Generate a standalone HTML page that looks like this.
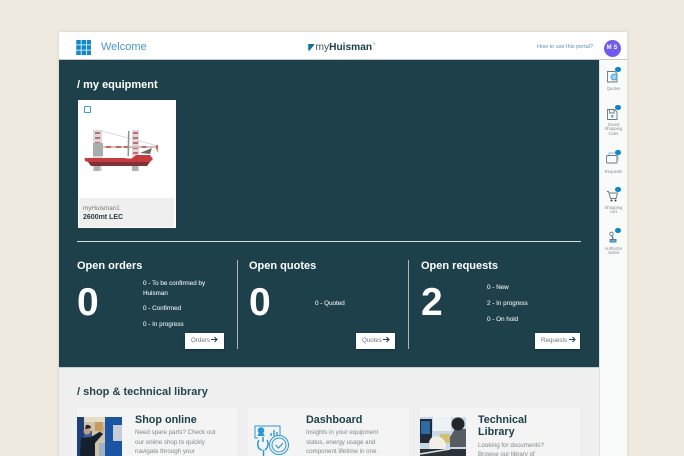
<!DOCTYPE html>
<html><head><meta charset="utf-8"><style>
*{box-sizing:border-box;margin:0;padding:0}
html,body{width:684px;height:456px;overflow:hidden}
body{background:#efeadf;font-family:"Liberation Sans",sans-serif;position:relative}
.a{position:absolute;white-space:nowrap}
.h{font-weight:bold;color:#fff;font-size:11px}
.n{font-weight:bold;color:#fff;font-size:39px;line-height:40px}
.s{color:#e4e9ea;font-size:6.3px;line-height:9px;-webkit-text-stroke:.1px #e4e9ea}
.b{background:#fff;color:#6a767a;font-size:6.2px;height:16px;line-height:16px;box-shadow:0 1px 2px rgba(0,0,0,.3);padding-left:6px}
.b svg{vertical-align:-1px;margin-left:1.500px}
.v{background:#a9b8bb;width:1px;top:260px;height:89px}
.l{color:#858e92;font-size:4.2px;line-height:4.9px;text-align:center;width:27px;left:600px;white-space:normal}
.d{width:5.5px;height:5.5px;border-radius:50%;background:#0f86c8}
.c{background:#f4f4f4;top:408px;height:48px}
.t{color:#1d404a;font-weight:bold;font-size:10.8px;line-height:12px}
.p{color:#7e888c;font-size:6.2px;line-height:9.5px}
</style></head><body>
<div class="a" style="left:59px;top:32px;width:568px;height:424px;background:#fff;box-shadow:0 0 3px rgba(120,110,90,.25)"></div>
<div class="a" style="left:59px;top:59px;width:568px;height:1px;background:#c4c8c8"></div>

<svg class="a" style="left:75.500px;top:40px" width="15.500" height="15" viewBox="0 0 16 16" fill="#1088c9"><rect x="0" y="0" width="4.800" height="4.800"/><rect x="5.600" y="0" width="4.800" height="4.800"/><rect x="11.200" y="0" width="4.800" height="4.800"/><rect x="0" y="5.600" width="4.800" height="4.800"/><rect x="5.600" y="5.600" width="4.800" height="4.800"/><rect x="11.200" y="5.600" width="4.800" height="4.800"/><rect x="0" y="11.200" width="4.800" height="4.800"/><rect x="5.600" y="11.200" width="4.800" height="4.800"/><rect x="11.200" y="11.200" width="4.800" height="4.800"/></svg>
<div class="a" style="left:101px;top:40px;font-size:11px;line-height:14px;color:#4a97cc">Welcome</div>

<svg class="a" style="left:307.500px;top:44px" width="7" height="6.500" viewBox="0 0 7 7"><path d="M0 0H7L1.500 7H0Z" fill="#0f6fa8"/></svg>
<div class="a" style="left:315.500px;top:41.500px;font-size:10.200px;line-height:12px;color:#3a4e55">my<b style="color:#1d404a">Huisman</b></div>
<div class="a" style="left:373px;top:42px;font-size:3px;line-height:4px;color:#667">®</div>

<div class="a" style="left:537px;top:43px;font-size:5.500px;line-height:8px;color:#5f8fb8">How to use this portal?</div>
<div class="a" style="left:603.500px;top:39.500px;width:17px;height:17px;border-radius:50%;background:#6f5bf0;color:#fff;font-size:6px;font-weight:bold;line-height:17px;text-align:center">M S</div>

<!-- teal -->
<div class="a" style="left:59px;top:60px;width:541px;height:307px;background:#1d404a"></div>
<div class="a" style="left:599px;top:60px;width:28px;height:396px;background:#f9fafa;border-left:1px solid #dfe2e3"></div>
<div class="a" style="left:59px;top:367px;width:540px;height:89px;background:#efefef;border-top:1px solid #c9cfd0"></div>

<div class="a h" style="left:77px;top:78px;line-height:14px">/ my equipment</div>

<!-- card -->
<div class="a" style="left:77.500px;top:100px;width:98.500px;height:128px;background:#fff"></div>
<div class="a" style="left:79px;top:198px;width:95px;height:29px;background:#efefef"></div>
<div class="a" style="left:83.500px;top:106px;width:7px;height:7px;border:1.500px solid #3f9ad0;border-radius:1px;background:#fff"></div>
<svg class="a" style="left:84px;top:128px" width="82" height="50" viewBox="0 0 82 50">
<path d="M9 2H18V43H9Z" fill="#dcd8d8"/>
<path d="M48 2H55V43H48Z" fill="#e0d8d8"/>
<path d="M11 4h5v2h-5zM11 9h5v2h-5zM11 14h5v2h-5zM49 4h5v2h-5zM49 9h5v2h-5zM49 14h5v2h-5zM49 19h5v2h-5zM49 24h5v2h-5z" fill="#b54a50" opacity=".75"/>
<path d="M9 15H19V28H9Z" fill="#a8acac"/>
<path d="M18 3L74 18" stroke="#d0d0d0" stroke-width=".7" fill="none"/>
<path d="M18 19H74" stroke="#d5bcbc" stroke-width="2"/>
<path d="M22 19h5M32 19h5M40 19h4M58 19h4" stroke="#b33" stroke-width="1.200"/>
<path d="M44 3L43.500 28H45L45.500 3Z" fill="#8d9294"/>
<path d="M56 25L68 20L66 26Z" fill="#6d6a66"/>
<path d="M73 17V22" stroke="#c33" stroke-width="1.300"/><path d="M73 23h1.500" stroke="#c9b13a" stroke-width="1.500"/>
<path d="M0.500 30H40L44 30.500H48L52 27H66L69 31L66 34H4L1 33Z" fill="#c63b3f"/>
<path d="M4 34H66L63 38H7Z" fill="#7c3436"/>
<path d="M10 38h6v5h-6zM48 38h6v5h-6z" fill="#b0b0b0"/>
</svg>
<div class="a" style="left:83px;top:205px;font-size:6.300px;line-height:8px;color:#74797c">myHuisman1</div>
<div class="a" style="left:83px;top:213px;font-size:7px;line-height:9px;font-weight:bold;color:#2c3c42">2600mt LEC</div>

<div class="a" style="left:77px;top:241px;width:504px;height:1px;background:#d4dcdc"></div>

<!-- orders -->
<div class="a h" style="left:77px;top:259px;line-height:14px">Open orders</div>
<div class="a n" style="left:77px;top:283px">0</div>
<div class="a s" style="left:143px;top:279px;line-height:9.500px">0 - To be confirmed by<br>Huisman</div>
<div class="a s" style="left:143px;top:304px">0 - Confirmed</div>
<div class="a s" style="left:143px;top:320px">0 - In progress</div>
<div class="a b" style="left:185px;top:333px;width:39px">Orders<svg width="7" height="7" viewBox="0 0 7 7" fill="none" stroke="#1d404a" stroke-width="1.100"><path d="M0 3.500H6M3.500 1L6 3.500L3.500 6"/></svg></div>
<div class="a v" style="left:236.500px"></div>

<!-- quotes -->
<div class="a h" style="left:249px;top:259px;line-height:14px">Open quotes</div>
<div class="a n" style="left:249px;top:283px">0</div>
<div class="a s" style="left:315px;top:299px">0 - Quoted</div>
<div class="a b" style="left:356px;top:333px;width:39px">Quotes<svg width="7" height="7" viewBox="0 0 7 7" fill="none" stroke="#1d404a" stroke-width="1.100"><path d="M0 3.500H6M3.500 1L6 3.500L3.500 6"/></svg></div>
<div class="a v" style="left:408px"></div>

<!-- requests -->
<div class="a h" style="left:421px;top:259px;line-height:14px">Open requests</div>
<div class="a n" style="left:421px;top:283px">2</div>
<div class="a s" style="left:487px;top:283px">0 - New</div>
<div class="a s" style="left:487px;top:299px">2 - In progress</div>
<div class="a s" style="left:487px;top:315px">0 - On hold</div>
<div class="a b" style="left:535px;top:333px;width:45px">Requests<svg width="7" height="7" viewBox="0 0 7 7" fill="none" stroke="#1d404a" stroke-width="1.100"><path d="M0 3.500H6M3.500 1L6 3.500L3.500 6"/></svg></div>

<!-- sidebar -->
<svg class="a" style="left:600px;top:60px" width="27" height="190" viewBox="0 0 27 190" fill="none" stroke="#66797f" stroke-width=".9">
<path d="M7.500 11.500h7.500l2 2v8.500h-9.500z"/><circle cx="14" cy="17" r="3" fill="#9fd0ec" stroke="#4a9fd0"/>
<path d="M7.500 49.500h7l2.500 2.500v7.500h-9.500z"/><path d="M9.500 49.500v3.500h4.500v-3.500"/><rect x="11" y="55" width="2.500" height="2.500" fill="#5fb0de" stroke="none"/>
<path d="M9 95v-2h9v7h-1" stroke="#7fc0e6"/><rect x="6.500" y="95.500" width="10.500" height="7.500" rx="1"/>
<path d="M7 131.500h1.500l2 7h5.500l1.500-5.500h-8.500"/><circle cx="11.500" cy="140.500" r="1" fill="#1d404a" stroke="none"/><circle cx="15.500" cy="140.500" r="1" fill="#1d404a" stroke="none"/>
<circle cx="11.500" cy="174" r="1.800"/><path d="M12 176l1 3" stroke-width="1.400"/><path d="M10 179.500h6v2.500h-6z" fill="#5fb0de" stroke="#4a7d98"/>
</svg>
<div class="a d" style="left:615px;top:66.500px"></div>
<div class="a d" style="left:615px;top:104.500px"></div>
<div class="a d" style="left:615px;top:149.500px"></div>
<div class="a d" style="left:615px;top:186.500px"></div>
<div class="a d" style="left:615px;top:227.500px"></div>
<div class="a l" style="top:86.500px">Quotes</div>
<div class="a l" style="top:122.500px">Saved<br>Shopping<br>Carts</div>
<div class="a l" style="top:169.500px">Requests</div>
<div class="a l" style="top:205.500px">Shopping<br>cart</div>
<div class="a l" style="top:246.500px">Authorize<br>orders</div>

<!-- library -->
<div class="a" style="left:77px;top:385px;font-weight:bold;font-size:11px;line-height:14px;color:#24464f">/ shop &amp; technical library</div>

<div class="a c" style="left:77px;width:160px"></div>
<div class="a c" style="left:248px;width:161px"></div>
<div class="a c" style="left:420px;width:160px"></div>

<svg class="a" style="left:77px;top:417px" width="45" height="39" viewBox="0 0 45 39">
<rect width="45" height="39" fill="#cfc3aa"/>
<rect x="0" y="0" width="7" height="39" fill="#1f3f78"/>
<rect x="7" y="0" width="21" height="5" fill="#e6dcc6"/>
<rect x="7" y="14" width="8" height="10" fill="#3d5f96"/>
<rect x="18" y="5" width="8" height="9" fill="#c79b5d"/>
<rect x="28" y="0" width="17" height="39" fill="#1a55a4"/>
<rect x="36" y="8" width="9" height="16" fill="#c5ced8"/>
<rect x="22" y="26" width="6" height="13" fill="#9fb0c4"/>
<circle cx="10" cy="14" r="3.500" fill="#c59f84"/>
<path d="M9 8a4 3 0 0 1 5 3L8 12Z" fill="#232326"/>
<path d="M4 21L14 20L24 14L26 17L18 26L18 39H3Z" fill="#15202c"/>
<path d="M23 15l3-5 2 1.500-3 5z" fill="#cfa58a"/>
</svg>
<svg class="a" style="left:254px;top:420px" width="36" height="36" viewBox="0 0 36 36" fill="none" stroke="#2d97d3" stroke-width="1">
<path d="M4 18H1V6H26V15"/>
<circle cx="7" cy="10.500" r="2.800" fill="#2d97d3"/><path d="M3.500 16a3.500 3.500 0 0 1 7 0z" fill="#2d97d3" stroke="none"/>
<path d="M17 16V13M20 16V10M23 16V12" stroke-width="1.400"/>
<path d="M9 17v5M5 20c-2 3-2 9 3 10M13 20c2 3 1 8-2 10M9.500 30v6" stroke-width="1.500"/>
<circle cx="25" cy="25" r="9.500"/><circle cx="25" cy="25" r="7"/><path d="M21.500 25l3 3 4.500-5" stroke-width="1.200"/>
</svg>
<svg class="a" style="left:420px;top:417px" width="46" height="39" viewBox="0 0 46 39">
<rect width="46" height="39" fill="#c9d8e6"/>
<rect x="13" y="0" width="18" height="14" fill="#eef1f4"/>
<rect x="0" y="2" width="12" height="24" fill="#1f2c38"/>
<rect x="1" y="4" width="9" height="13" fill="#2f6aa5"/>
<rect x="20" y="17" width="10" height="9" fill="#d6b84a" opacity=".75"/>
<path d="M30 30V20L35 12H46V30Z" fill="#555d63"/>
<circle cx="38" cy="7" r="6.500" fill="#25262a"/>
<path d="M9 27C9 15 26 18 26 29L25 32H10Z" fill="#f2efe6"/>
<rect x="0" y="32" width="46" height="7" fill="#2c3238"/>
<path d="M0 37L30 32" stroke="#dfe5ea" stroke-width="1.500"/>
</svg>

<div class="a t" style="left:135px;top:413.500px">Shop online</div>
<div class="a p" style="left:135px;top:428px">Need spare parts? Check out<br>our online shop to quickly<br>navigate through your</div>
<div class="a t" style="left:306px;top:413.500px">Dashboard</div>
<div class="a p" style="left:306px;top:428px">Insights in your equipment<br>status, energy usage and<br>component lifetime in one</div>
<div class="a t" style="left:478px;top:413.500px">Technical<br>Library</div>
<div class="a p" style="left:478px;top:440.500px">Looking for documents?<br>Browse our library of</div>
</body></html>
